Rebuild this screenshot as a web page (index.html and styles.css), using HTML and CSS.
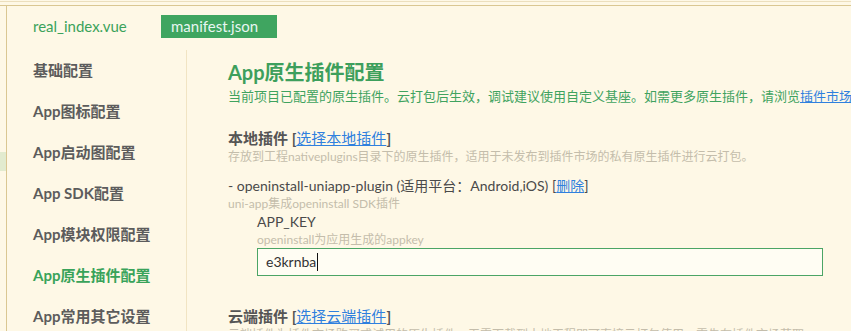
FILE: index.html
```html
<!DOCTYPE html>
<html lang="zh-CN">
<head>
    <meta charset="UTF-8">
    <meta name="viewport" content="width=device-width, initial-scale=1.0">
    <title>manifest.json - App原生插件配置</title>
    <link rel="stylesheet" href="styles.css">
</head>
<body>
    <div class="topline"></div>
    <div class="frame">
        <div class="gutter">
            <div class="gutter-mark"></div>
        </div>
        <div class="window">
            <div class="tabs">
                <div class="tab">real_index.vue</div>
                <div class="tab active">manifest.json</div>
            </div>

            <div class="layout">
                <ul class="sidebar">
                    <li>基础配置</li>
                    <li>App图标配置</li>
                    <li>App启动图配置</li>
                    <li>App SDK配置</li>
                    <li>App模块权限配置</li>
                    <li class="active">App原生插件配置</li>
                    <li>App常用其它设置</li>
                </ul>

                <div class="main">
                    <h1>App原生插件配置</h1>
                    <p class="intro">当前项目已配置的原生插件。云打包后生效，调试建议使用自定义基座。如需更多原生插件，请浏览<a href="#">插件市场</a></p>

                    <div class="section">
                        <div class="section-title">本地插件 [<a href="#">选择本地插件</a>]</div>
                        <div class="hint">存放到工程nativeplugins目录下的原生插件，适用于未发布到插件市场的私有原生插件进行云打包。</div>

                        <div class="plugin">
                            <div class="plugin-name">- openinstall-uniapp-plugin (适用平台：Android,iOS) [<a href="#">删除</a>]</div>
                            <div class="hint">uni-app集成openinstall SDK插件</div>
                            <div class="param">
                                <div class="param-name">APP_KEY</div>
                                <div class="hint">openinstall为应用生成的appkey</div>
                                <div class="field">e3krnba<span class="caret"></span></div>
                            </div>
                        </div>
                    </div>

                    <div class="section cloud">
                        <div class="section-title">云端插件 [<a href="#">选择云端插件</a>]</div>
                        <div class="hint">云端插件为插件市场购买或试用的原生插件，无需下载到本地工程即可直接云打包使用，需先在插件市场获取。</div>
                    </div>
                </div>
            </div>
        </div>
    </div>
</body>
</html>
```

FILE: styles.css
```css
body {
    margin: 0;
    padding-top: 1px;
    height: 330px;
    overflow: hidden;
    background-color: #fef8e6;
    font-family: Lato, "Noto Sans CJK SC", sans-serif;
    color: #4a4a4a;
}
a {
    color: #2f80de;
    text-decoration: underline;
}
.topline {
    height: 1px;
    background-color: #ecdfbd;
}
.frame {
    display: flex;
    margin-top: 3px;
    border-top: 1px solid #dac792;
    height: 400px;
}
.gutter {
    width: 6px;
    border-right: 1px solid #dac792;
}
.gutter-mark {
    margin-top: 146px;
    height: 19px;
    background-color: #e2ebcf;
}
.window {
    flex: 1;
    min-width: 0;
}
.tabs {
    display: flex;
    gap: 22px;
    padding: 9px 0 0 16px;
}
.tab {
    width: 106px;
    height: 23px;
    line-height: 23px;
    padding-left: 10px;
    font-size: 15px;
    color: #3ba35b;
}
.tab.active {
    background-color: #3fa560;
    color: #e8f6f2;
}
.layout {
    display: flex;
    margin-top: 12px;
}
.sidebar {
    list-style: none;
    margin: 0;
    padding: 0 0 0 26px;
    width: 153px;
    border-right: 1px solid #f1e4c3;
    flex-shrink: 0;
}
.sidebar li {
    line-height: 41px;
    font-size: 15px;
    font-weight: bold;
    color: #5c5c5c;
    white-space: nowrap;
}
.sidebar li.active {
    color: #39a35a;
}
.main {
    flex: 1;
    min-width: 0;
    padding-left: 41px;
    white-space: nowrap;
    overflow: hidden;
}
.main h1 {
    margin: 8px 0 0;
    font-size: 20px;
    line-height: 28px;
    color: #3d9f5c;
}
.intro {
    margin: 0;
    font-size: 13px;
    line-height: 20px;
    color: #3fa35f;
}
.section {
    margin-top: 21px;
}
.section-title {
    font-size: 15px;
    line-height: 22px;
    font-weight: bold;
    color: #555;
}
.section-title a {
    font-weight: normal;
}
.hint {
    font-size: 12px;
    line-height: 16px;
    color: #c4bdab;
}
.plugin {
    margin-top: 11px;
}
.plugin-name {
    font-size: 14px;
    line-height: 20px;
    color: #4a4a4a;
}
.param {
    padding-left: 29px;
}
.param-name {
    font-size: 14px;
    line-height: 20px;
    color: #4a4a4a;
}
.field {
    width: 556px;
    height: 26px;
    line-height: 26px;
    padding-left: 8px;
    border: 1px solid #4ba565;
    background-color: #fffdf3;
    font-size: 14px;
    color: #333;
}
.caret {
    display: inline-block;
    width: 1px;
    height: 18px;
    margin-left: 1px;
    vertical-align: -4px;
    background-color: #111;
}
.section.cloud {
    margin-top: 29px;
}
```
